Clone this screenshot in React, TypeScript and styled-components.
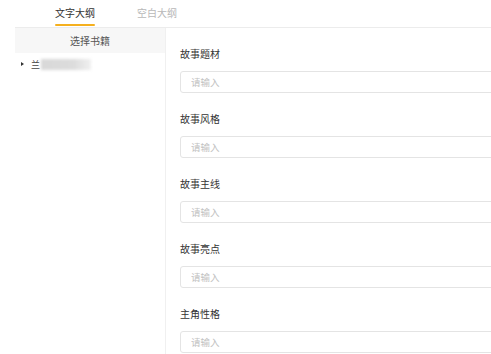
import styled, { createGlobalStyle } from "styled-components"

const Global = createGlobalStyle`
  html, body {
    margin: 0;
    padding: 0;
    background: #fff;
  }
  body {
    width: 491px;
    height: 354px;
    overflow: hidden;
    font-family: "Noto Sans CJK SC", "Noto Sans", sans-serif;
  }
`;

const Page = styled.div`
  display: flex;
  flex-direction: column;
  width: 491px;
  height: 354px;
  overflow: hidden;
`;

const TabBar = styled.div`
  display: flex;
  gap: 42px;
  height: 27px;
  margin-left: 15px;
  padding-left: 40px;
  border-bottom: 1px solid #ececec;
`;

const Tab = styled.div<{ $active?: boolean }>`
  position: relative;
  display: flex;
  align-items: center;
  height: 27px;
  padding-bottom: 3px;
  box-sizing: border-box;
  font-size: 10px;
  color: ${p => (p.$active ? "#333" : "#b8b8b8")};

  &::after {
    content: "";
    display: ${p => (p.$active ? "block" : "none")};
    position: absolute;
    left: 0;
    right: 0;
    bottom: 1px;
    height: 2.5px;
    border-radius: 2px;
    background: #f5b01f;
  }
`;

const Body = styled.div`
  display: flex;
  flex: 1;
  margin-left: 15px;
`;

const Sidebar = styled.div`
  width: 150px;
  border-right: 1px solid #f0f0f0;
`;

const SidebarHeader = styled.div`
  height: 25px;
  display: flex;
  align-items: center;
  justify-content: center;
  background: #f7f7f7;
  font-size: 10px;
  color: #555;
`;

const TreeItem = styled.div`
  display: flex;
  align-items: center;
  height: 20px;
  padding-left: 6px;
  margin-top: 1px;
  font-size: 9px;
  color: #444;
`;

const Caret = styled.span`
  width: 0;
  height: 0;
  border-top: 2.5px solid transparent;
  border-bottom: 2.5px solid transparent;
  border-left: 3px solid #333;
  margin-right: 7px;
`;

const Redacted = styled.span`
  display: inline-block;
  width: 50px;
  height: 11px;
  margin-left: 1px;
  background: linear-gradient(90deg, #d8d8d8 0%, #dcdcdc 65%, #f0f0f0 100%);
  filter: blur(1.5px);
`;

const Main = styled.div`
  flex: 1;
  overflow: hidden;
  padding: 19px 0 0 14px;
`;

const Field = styled.div`
  display: flex;
  flex-direction: column;
  margin-bottom: 19.5px;
`;

const Label = styled.div`
  height: 14px;
  line-height: 14px;
  margin-bottom: 9.5px;
  font-size: 10px;
  color: #333;
`;

const Input = styled.input`
  width: 110%;
  height: 22px;
  box-sizing: border-box;
  border: 1px solid #e4e4e4;
  border-radius: 3px;
  padding: 0 10px;
  font-family: inherit;
  font-size: 9.5px;
  outline: none;

  &::placeholder {
    color: #c2c2c2;
  }
`;

const fields = ["故事题材", "故事风格", "故事主线", "故事亮点", "主角性格"];

export default function App() {
  return (
    <Page>
      <Global />
      <TabBar>
        <Tab $active>文字大纲</Tab>
        <Tab>空白大纲</Tab>
      </TabBar>
      <Body>
        <Sidebar>
          <SidebarHeader>选择书籍</SidebarHeader>
          <TreeItem>
            <Caret />
            兰
            <Redacted />
          </TreeItem>
        </Sidebar>
        <Main>
          {fields.map(f => (
            <Field key={f}>
              <Label>{f}</Label>
              <Input placeholder="请输入" />
            </Field>
          ))}
        </Main>
      </Body>
    </Page>
  )
}
